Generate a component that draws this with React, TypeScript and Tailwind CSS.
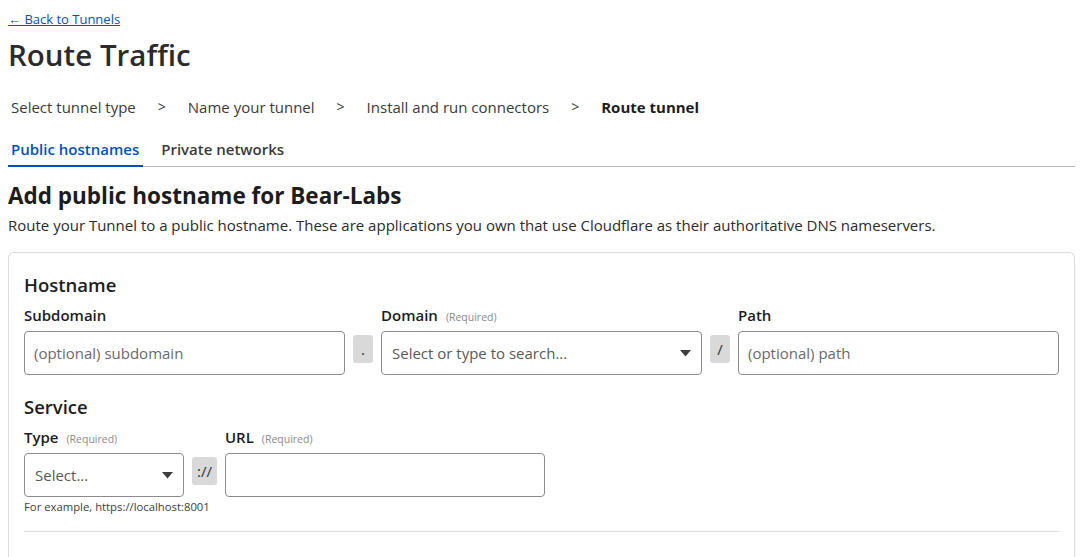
const font = { fontFamily: '"Open Sans", "Noto Sans", sans-serif' };

function Addon({ children, wide }: { children: React.ReactNode; wide?: boolean }) {
  return (
    <div
      className={`mt-1 flex h-7 min-w-5 items-center justify-center rounded-[3px] bg-[#d9d9d9] text-[15px] text-[#313131] ${
        wide ? "px-[5px]" : "px-[4px]"
      }`}
    >
      {children}
    </div>
  );
}

function Label({ text, required }: { text: string; required?: boolean }) {
  return (
    <div className="mb-[6px] flex h-5 items-baseline gap-2 leading-5">
      <span className="text-[15px] font-semibold text-[#1d1d1d]">{text}</span>
      {required && <span className="text-[10.5px] text-[#8a8a8a]">(Required)</span>}
    </div>
  );
}

function TextInput({ placeholder }: { placeholder?: string }) {
  return (
    <div className="flex h-11 items-center rounded-[4px] border border-[#8c8c8c] bg-white px-[9px] text-[15px] text-[#6a6a6a]">
      {placeholder}
    </div>
  );
}

function SelectInput({ placeholder }: { placeholder: string }) {
  return (
    <div className="flex h-11 items-center justify-between rounded-[4px] border border-[#8c8c8c] bg-white pl-[10px] pr-[9px] text-[15px] text-[#595959]">
      <span>{placeholder}</span>
      <svg width="11" height="7" viewBox="0 0 11 7" className="mr-[1px]">
        <path d="M0 0h11L5.5 6.5z" fill="#3d3d3d" />
      </svg>
    </div>
  );
}

export default function App() {
  const steps = ["Select tunnel type", "Name your tunnel", "Install and run connectors"];
  return (
    <div className="h-[557px] overflow-hidden bg-white pl-2 pr-[11px] text-[#313131]" style={font}>
      <div className="pt-[10px] text-[13px] leading-[18px]">
        <a href="#" className="text-[#0051c3] underline">
          ← Back to Tunnels
        </a>
      </div>
      <h1 className="mt-[7px] text-[29.5px] font-semibold leading-[40px] text-[#2b2b2b]">Route Traffic</h1>

      <div className="mt-[21px] flex items-center gap-[22px] pl-[3px] text-[15px] leading-[22px] text-[#3a3a3a]">
        {steps.map((s) => (
          <div key={s} className="flex items-center gap-[22px]">
            <span>{s}</span>
            <span className="text-[14px]">&gt;</span>
          </div>
        ))}
        <span className="font-bold text-[#1d1d1d]">Route tunnel</span>
      </div>

      <div className="mt-[20px] flex gap-[14px] border-b border-[#b6b6b6] text-[15px] leading-[22px]">
        <div className="-mb-px border-b-2 border-[#0051c3] pl-[3px] pr-[4px] pb-[5px] font-semibold text-[#0051c3]">
          Public hostnames
        </div>
        <div className="px-1 pb-[5px] font-semibold text-[#3a3a3a]">Private networks</div>
      </div>

      <h2 className="mt-[14px] text-[22.5px] font-bold leading-[30px] text-[#1d1d1d]">
        Add public hostname for Bear-Labs
      </h2>
      <p className="mt-[3px] text-[15px] leading-[22px] text-[#2b2b2b]">
        Route your Tunnel to a public hostname. These are applications you own that use Cloudflare as their
        authoritative DNS nameservers.
      </p>

      <div className="mt-[16px] rounded-t-[6px] border border-b-0 border-[#dcdcdc] px-[15px] pb-6 pt-[19px]">
        <h3 className="text-[18.5px] font-semibold leading-[26px] text-[#1d1d1d]">Hostname</h3>
        <div className="mt-[7px] grid grid-cols-[1fr_auto_1fr_auto_1fr] gap-x-2">
          <div>
            <Label text="Subdomain" />
            <TextInput placeholder="(optional) subdomain" />
          </div>
          <div className="pt-[26px]">
            <Addon>.</Addon>
          </div>
          <div>
            <Label text="Domain" required />
            <SelectInput placeholder="Select or type to search..." />
          </div>
          <div className="pt-[26px]">
            <Addon>/</Addon>
          </div>
          <div>
            <Label text="Path" />
            <TextInput placeholder="(optional) path" />
          </div>
        </div>

        <h3 className="mt-[19px] text-[18.5px] font-semibold leading-[26px] text-[#1d1d1d]">Service</h3>
        <div className="mt-[7px] flex gap-2">
          <div className="w-[160px]">
            <Label text="Type" required />
            <SelectInput placeholder="Select..." />
            <div className="mt-[3px] whitespace-nowrap text-[11.3px] leading-[14px] text-[#404040]">
              For example, https://localhost:8001
            </div>
          </div>
          <div className="pt-[26px]">
            <Addon wide>://</Addon>
          </div>
          <div className="w-[320px]">
            <Label text="URL" required />
            <TextInput />
          </div>
        </div>

        <div className="mt-[17px] border-t border-[#dcdcdc]" />
        <div className="h-10" />
      </div>
    </div>
  );
}
